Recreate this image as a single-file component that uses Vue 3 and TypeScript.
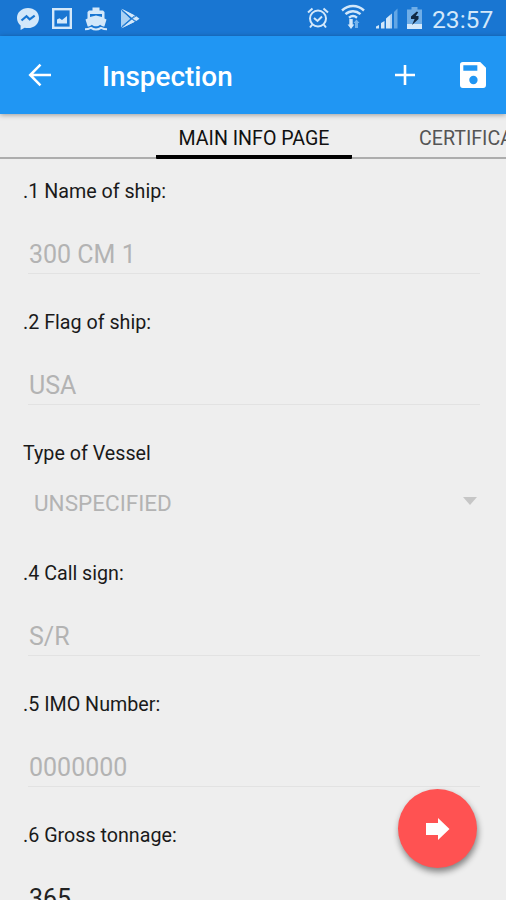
<script setup lang="ts">
interface Field {
  label: string
  value: string
  kind: 'text' | 'select'
  editable?: boolean
}

const fields: Field[] = [
  { label: '.1 Name of ship:', value: '300 CM 1', kind: 'text' },
  { label: '.2 Flag of ship:', value: 'USA', kind: 'text' },
  { label: 'Type of Vessel', value: 'UNSPECIFIED', kind: 'select' },
  { label: '.4 Call sign:', value: 'S/R', kind: 'text' },
  { label: '.5 IMO Number:', value: '0000000', kind: 'text' },
  { label: '.6 Gross tonnage:', value: '365', kind: 'text', editable: true },
]
</script>

<template>
  <div class="screen">
    <header class="status">
      <div class="status-left">
        <svg class="messenger" viewBox="0 0 24 24" width="24" height="24">
          <path fill="#d3e8fa" d="M12 1C5.700 1 1 5.400 1 11c0 3.100 1.400 5.800 3.600 7.600V23l4-2.300c1.100.3 2.200.4 3.400.4 6.300 0 11-4.400 11-10.100S18.300 1 12 1z" />
          <path fill="none" stroke="#1976d2" stroke-width="2.200" d="M5.500 13.500l5-4.300 3.200 3.200 5-3.700" />
        </svg>
        <svg class="photo" viewBox="0 0 20 21" width="20" height="21">
          <rect x="1.200" y="1.200" width="17.600" height="18.600" fill="none" stroke="#d3e8fa" stroke-width="2.400" />
          <path fill="#d3e8fa" d="M5 15.500v-4l2.500-1.200L10 12l5-4v7.500z" />
        </svg>
        <svg class="boat" viewBox="0 0 24 24" width="24" height="25">
          <path fill="#d3e8fa" d="M8.500 0h7v3H19l1.500 1.500V11l2 1-2.100 7c-1.600 0-3-.7-4.300-1.800-2.400 2.200-5.800 2.200-8.200 0-1.200 1.100-2.600 1.800-4.200 1.800L1.500 12l2-1V4.500L5 3h3.500z" />
          <path fill="#1976d2" d="M6 6.500h12v3L12 8 6 9.500z" />
          <path fill="none" stroke="#d3e8fa" stroke-width="2" d="M1 21.800c3 0 4-.5 6-1.500 3 2 7 2 10 0 2 1 3 1.500 6 1.500" />
        </svg>
        <svg class="play" viewBox="0 0 20 22" width="20" height="22">
          <path fill="#a9d1f4" d="M1 1.500v18L10.500 11z" />
          <path fill="#d3e8fa" d="M1.500.8l10.800 8.400 3-1.500zM1.500 20.200l10.800-8 3 1.300zM12.600 10.700l3.700-2.500 3.200 2.500-3.200 2.400z" />
          <path fill="#d3e8fa" d="M1.500.8L15.300 7.700l-3 2.500zM1.500 20.200l13.800-6.700-3-2.500z" />
          <path fill="none" stroke="#1976d2" stroke-width=".8" d="M1.800 2.500l13 11M1.800 18.500l13-11" />
        </svg>
      </div>
      <div class="status-right">
        <svg class="alarm" viewBox="0 0 22 22" width="22" height="22">
          <g fill="none" stroke="#d3e8fa" stroke-width="2">
            <circle cx="11" cy="11.500" r="8" />
            <path d="M1 5.500L5.500 1.500M21 5.500l-4.500-4M7 11l3.500 3L15 9.500M5.200 17.700L3 20.500M16.800 17.700l2.200 2.800" />
          </g>
        </svg>
        <svg class="wifi" viewBox="0 0 24 26" width="24" height="26">
          <g fill="none" stroke="#d3e8fa" stroke-width="2.400">
            <path d="M1 6.500c6.500-6 15.500-6 22 0M4.500 10.200c4.500-4 10.500-4 15 0M8 13.700c2.500-2 5.500-2 8 0" />
          </g>
          <path fill="#d3e8fa" d="M8.300 15h3.400v5.500h1.600L10 25l-3.400-4.500h1.700z" />
          <path fill="#74b3ec" d="M14 24v-5h-1.500l3-3.500 3 3.500H17v5z" />
        </svg>
        <svg class="signal" viewBox="0 0 22 22" width="22" height="22">
          <path fill="#d3e8fa" d="M0 21.500v-2l3-1.500v3.500zM5 21.500V16l3.500-2v7.500zM10 21.500V11.500L14 8v13.500z" />
          <path fill="#d3e8fa" opacity=".8" d="M14 8l2-1.500v15h-2z" />
          <path fill="#62a6e5" d="M18 5l3.500-3.500v20H18z" />
        </svg>
        <svg class="battery" viewBox="0 0 15 22" width="15" height="22">
          <path fill="#70aee7" d="M4.500 0h6v2.500H15V17H0V2.500h4.500z" />
          <path fill="#d3e8fa" d="M0 17h15v5H0z" />
          <path fill="#102a45" d="M9.800 4.500L4 9.500V12h3.600L5 18l6.500-6V9H8.700l2.500-3.800z" />
        </svg>
        <span class="clock">23:57</span>
      </div>
    </header>

    <div class="toolbar">
      <svg class="back" viewBox="0 0 24 24" width="24" height="24">
        <path fill="none" stroke="#fff" stroke-width="2.500" d="M23 12H2.500M12.500 1.700L2.200 12l10.300 10.300" />
      </svg>
      <h1 class="title">Inspection</h1>
      <svg class="plus" viewBox="0 0 20 20" width="20" height="20">
        <path fill="none" stroke="#fff" stroke-width="2.600" d="M10 0v20M0 10h20" />
      </svg>
      <svg class="save" viewBox="3 3 18 18" width="26" height="26">
        <path fill="#fff" d="M17 3H5a2 2 0 0 0-2 2v14a2 2 0 0 0 2 2h14a2 2 0 0 0 2-2V7zM12.300 18.400a2.900 2.900 0 1 1 0-5.800 2.900 2.900 0 0 1 0 5.800zM15 9H5.300V5.300H15z" />
      </svg>
    </div>

    <nav class="tabs">
      <div class="tab-gap"></div>
      <div class="tab active"><span>MAIN INFO PAGE</span></div>
      <div class="tab next"><span>CERTIFICATES</span></div>
    </nav>

    <main class="form">
      <section v-for="f in fields" :key="f.label" class="field" :class="f.kind">
        <div class="label">{{ f.label }}</div>
        <div class="value" :class="{ editable: f.editable }">
          <span>{{ f.value }}</span>
          <svg v-if="f.kind === 'select'" class="caret" viewBox="0 0 14 8" width="14" height="8">
            <path fill="#c6c6c6" d="M0 0h14L7 8z" />
          </svg>
        </div>
      </section>
    </main>

    <button class="fab" aria-label="Next">
      <svg viewBox="0 0 24 22" width="24" height="22">
        <path fill="#fff" d="M0 5h12V0l11.500 11L12 22v-5H0z" />
      </svg>
    </button>
  </div>
</template>

<style>
body {
  margin: 0;
  overflow: hidden;
}
</style>

<style scoped>
.screen {
  position: relative;
  display: flex;
  flex-direction: column;
  width: 506px;
  height: 900px;
  overflow: hidden;
  background: #eee;
  font-family: Roboto, "Liberation Sans", sans-serif;
}
.screen svg {
  display: block;
  flex: none;
}
.status {
  display: flex;
  justify-content: space-between;
  flex: none;
  box-sizing: border-box;
  height: 36px;
  padding: 7px 13px 0 16px;
  background: #1976d2;
}
.status-left,
.status-right {
  display: flex;
  align-items: flex-start;
}
.photo {
  margin: 1px 0 0 12px;
}
.boat {
  margin-left: 12px;
}
.play {
  margin: 1px 0 0 12px;
}
.wifi {
  margin: -3px 0 0 12px;
}
.signal {
  margin-left: 11px;
}
.battery {
  margin-left: 9px;
}
.clock {
  width: 61px;
  margin-left: 10px;
  margin-top: -2px;
  color: #d3e8fa;
  font-size: 24.600px;
  line-height: 30px;
  white-space: nowrap;
}
.toolbar {
  position: relative;
  z-index: 1;
  display: flex;
  align-items: center;
  flex: none;
  box-sizing: border-box;
  height: 78px;
  padding: 0 20px 0 28px;
  background: #2096f3;
  box-shadow: 0 1px 5px rgba(0, 0, 0, 0.35);
}
.title {
  flex: 1;
  margin: 4px 0 0 50px;
  color: #fff;
  font-size: 27.900px;
  font-weight: 500;
  line-height: 36px;
}
.save {
  margin-left: 45px;
}
.tabs {
  display: flex;
  flex: none;
  height: 45px;
  overflow: hidden;
  box-shadow: inset 0 -2px #adadad;
  font-size: 19.600px;
  line-height: 50px;
  white-space: nowrap;
}
.tab-gap {
  flex: none;
  width: 156px;
}
.tab {
  flex: none;
  box-sizing: border-box;
  height: 45px;
}
.active {
  width: 196px;
  border-bottom: 4px solid #000;
  border-radius: 1px;
  color: #111;
  text-align: center;
}
.next {
  padding-left: 67px;
  color: #555;
}
.form {
  display: flex;
  flex-direction: column;
  padding: 20.500px 26px 0 23px;
}
.field {
  flex: none;
  height: 131.300px;
}
.field.select {
  height: 119.500px;
}
.label {
  color: #1a1a1a;
  font-size: 19.700px;
  line-height: 24px;
  white-space: nowrap;
}
.value {
  display: flex;
  box-sizing: border-box;
  height: 34.500px;
  margin: 36px 0 0 5px;
  padding-left: 1px;
  border-bottom: 1px solid #e2e2e2;
  color: #b3b3b3;
  font-size: 25px;
  line-height: 30px;
  white-space: nowrap;
}
.value.editable {
  color: #222;
}
.select .value {
  align-items: center;
  justify-content: space-between;
  height: 30px;
  margin-top: 21.500px;
  padding: 0 3px 0 6px;
  border: 0;
  font-size: 22.500px;
}
.caret {
  margin-bottom: 3px;
}
.fab {
  position: absolute;
  top: 789px;
  left: 398px;
  display: flex;
  align-items: center;
  justify-content: center;
  width: 79px;
  height: 79px;
  padding: 0;
  border: 0;
  border-radius: 50%;
  background: #ff5252;
  box-shadow: 1px 4px 6px rgba(0, 0, 0, 0.45);
}
</style>
